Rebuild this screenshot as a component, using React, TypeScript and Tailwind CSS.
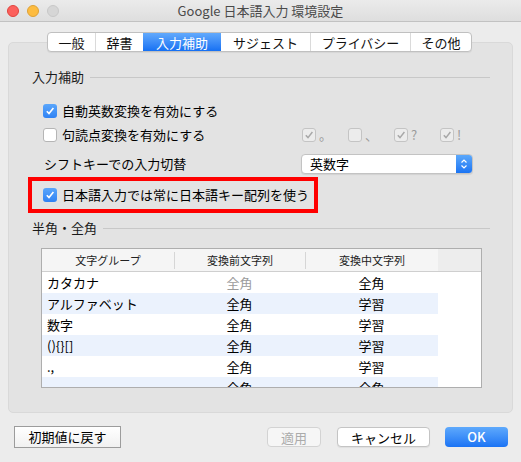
import type { ReactNode } from "react";

const font = { fontFamily: '"Noto Sans CJK JP", "Noto Sans", sans-serif' };

const tabs = [
  { label: "一般", w: "w-[47px]" },
  { label: "辞書", w: "w-[48px]" },
  { label: "入力補助", w: "w-[78px]", active: true },
  { label: "サジェスト", w: "w-[89px]" },
  { label: "プライバシー", w: "w-[100px]" },
  { label: "その他", w: "w-[61px]" },
];

const rows = [
  { group: "カタカナ", before: "全角", during: "全角", dim: true },
  { group: "アルファベット", before: "全角", during: "学習" },
  { group: "数字", before: "全角", during: "学習" },
  { group: "(){}[]", before: "全角", during: "学習" },
  { group: ".,", before: "全角", during: "学習" },
  { group: "", before: "全角", during: "全角" },
];

function Check({ on, disabled }: { on?: boolean; disabled?: boolean }) {
  if (disabled) {
    return (
      <span className="flex h-[14px] w-[14px] shrink-0 items-center justify-center rounded-[3px] border border-[#c4c4c4] bg-[#ececec]">
        {on && (
          <svg width="10" height="10" viewBox="0 0 10 10">
            <polyline points="1.8,5.2 4,7.6 8.4,2" fill="none" stroke="#a8a8a8" strokeWidth="1.5" />
          </svg>
        )}
      </span>
    );
  }
  return on ? (
    <span className="flex h-[14px] w-[14px] shrink-0 items-center justify-center rounded-[3px] bg-gradient-to-b from-[#5aa6fb] to-[#2f82f4]">
      <svg width="10" height="10" viewBox="0 0 10 10">
        <polyline points="1.8,5.2 4,7.6 8.4,2" fill="none" stroke="#fff" strokeWidth="1.6" />
      </svg>
    </span>
  ) : (
    <span className="h-[14px] w-[14px] shrink-0 rounded-[3px] border border-[#b5b5b5] bg-white" />
  );
}

function Section({ title }: { title: string }) {
  return (
    <div className="flex h-[16px] items-center gap-[6px] pr-[22px]">
      <span className="text-[13px] leading-[16px] text-[#1a1a1a]">{title}</span>
      <div className="flex-1 border-t border-[#c8c8c8] border-b-white" />
    </div>
  );
}

function Row({ children, className }: { children: ReactNode; className?: string }) {
  return <div className={`flex items-center ${className ?? ""}`}>{children}</div>;
}

export default function App() {
  return (
    <div className="flex h-[462px] w-[521px] flex-col bg-[#ececec] text-black" style={font}>
      <div className="relative flex h-[22px] items-center justify-center border-b border-[#c2c2c2] bg-gradient-to-b from-[#ebebeb] to-[#dedede]">
        <div className="absolute left-[7px] top-[5px] flex gap-[8px]">
          <span className="h-[12px] w-[12px] rounded-full border border-[#e0443e] bg-[#fc605c]" />
          <span className="h-[12px] w-[12px] rounded-full border border-[#dea236] bg-[#fdbc40]" />
          <span className="h-[12px] w-[12px] rounded-full border border-[#c8c8c8] bg-[#d6d6d6]" />
        </div>
        <span className="text-[13px] text-[#4a4a4a]">Google 日本語入力 環境設定</span>
      </div>

      <div className="relative z-10 mt-[10px] flex justify-center pr-[2px]">
        <div className="flex h-[20px] overflow-hidden rounded-[4px] border border-[#c0c0c0] bg-white shadow-[0_1px_1px_rgba(0,0,0,0.06)]">
          {tabs.map((t, i) => (
            <div
              key={t.label}
              className={`${t.w} flex items-center justify-center text-[13px] leading-none ${
                t.active
                  ? "bg-gradient-to-b from-[#61a9fc] to-[#1470f3] text-white"
                  : "text-[#111]"
              } ${i > 0 && !t.active && !tabs[i - 1].active ? "border-l border-[#dadada]" : ""}`}
            >
              {t.label}
            </div>
          ))}
        </div>
      </div>

      <div className="mx-[8px] -mt-[10px] flex h-[371px] flex-col rounded-[5px] border border-[#d9d9d9] bg-[#e3e3e3] pl-[23px] pt-[26px]">
        <Section title="入力補助" />

        <Row className="mt-[18px] h-[16px] pl-[11px]">
          <Check on />
          <span className="ml-[5px] text-[13px]">自動英数変換を有効にする</span>
        </Row>

        <Row className="mt-[8px] h-[16px] pl-[11px]">
          <div className="flex w-[259px] items-center">
            <Check />
            <span className="ml-[5px] text-[13px]">句読点変換を有効にする</span>
          </div>
          {[
            { on: true, mark: "。" },
            { on: false, mark: "、" },
            { on: true, mark: "?" },
            { on: true, mark: "!" },
          ].map((c) => (
            <div key={c.mark} className="flex w-[46px] items-center">
              <Check on={c.on} disabled />
              <span className="ml-[3px] text-[13px] text-[#9a9a9a]">{c.mark}</span>
            </div>
          ))}
        </Row>

        <Row className="mt-[11px] h-[20px] pl-[12px]">
          <span className="w-[257px] text-[13px]">シフトキーでの入力切替</span>
          <div className="flex h-[20px] w-[172px] overflow-hidden rounded-[4px] border border-[#c3c3c3] bg-white shadow-[0_1px_1px_rgba(0,0,0,0.08)]">
            <span className="flex-1 pl-[8px] text-[13px] leading-[18px]">英数字</span>
            <div className="flex w-[16px] items-center justify-center bg-gradient-to-b from-[#5ba8fb] to-[#1a74f3]">
              <svg width="8" height="12" viewBox="0 0 8 12">
                <polyline points="1.5,4.5 4,2 6.5,4.5" fill="none" stroke="#fff" strokeWidth="1.2" />
                <polyline points="1.5,7.5 4,10 6.5,7.5" fill="none" stroke="#fff" strokeWidth="1.2" />
              </svg>
            </div>
          </div>
        </Row>

        <Row className="-ml-[4px] mt-[3px] h-[36px] w-[290px] border-4 border-[#ff0000] pl-[11px]">
          <Check on />
          <span className="ml-[5px] text-[13px]">日本語入力では常に日本語キー配列を使う</span>
        </Row>

        <div className="mt-[7px]">
          <Section title="半角・全角" />
        </div>

        <div className="ml-[9px] mt-[12px] h-[140px] w-[441px] overflow-hidden border border-[#aeaeae] bg-white">
          <div className="flex h-[23px] border-b border-[#cfcfcf] text-[11px] text-[#222]">
            {["文字グループ", "変換前文字列", "変換中文字列"].map((h, i) => (
              <div
                key={h}
                className={`flex items-center justify-center bg-[#f5f5f5] ${
                  i === 0 ? "w-[132px]" : i === 1 ? "w-[131px]" : "w-[133px]"
                }`}
              >
                <span className={`flex h-[17px] w-full items-center justify-center ${i > 0 ? "border-l border-[#d6d6d6]" : ""}`}>
                  {h}
                </span>
              </div>
            ))}
            <div className="flex-1 bg-[#ededed]" />
          </div>
          {rows.map((r, i) => (
            <div key={i} className="flex h-[21px] items-center text-[13px]">
              <div className={`flex h-full w-[396px] items-center ${i % 2 ? "bg-[#ebf2fd]" : "bg-white"}`}>
                <span className="w-[132px] pl-[5px]">{r.group}</span>
                <span className={`w-[131px] text-center ${r.dim ? "text-[#9b9b9b]" : ""}`}>{r.before}</span>
                <span className="w-[133px] text-center">{r.during}</span>
              </div>
            </div>
          ))}
        </div>
      </div>

      <div className="mt-[13px] flex items-start pl-[14px] pr-[13px] text-[13px]">
        <button className="h-[22px] w-[107px] border border-[#9c9c9c] bg-gradient-to-b from-[#ffffff] to-[#f1f1f1]">
          初期値に戻す
        </button>
        <div className="ml-auto mt-[1px] flex gap-[16px]">
          <button className="h-[20px] w-[54px] rounded-[4px] border border-[#d3d3d3] bg-[#f6f6f6] text-[#ababab]">適用</button>
          <button className="h-[20px] w-[93px] rounded-[4px] border border-[#c4c4c4] bg-white shadow-[0_1px_1px_rgba(0,0,0,0.06)]">
            キャンセル
          </button>
          <button className="-ml-[1px] h-[20px] w-[63px] rounded-[4px] bg-gradient-to-b from-[#5ea9fc] to-[#1a73f4] font-[500] text-white">
            OK
          </button>
        </div>
      </div>
    </div>
  );
}
